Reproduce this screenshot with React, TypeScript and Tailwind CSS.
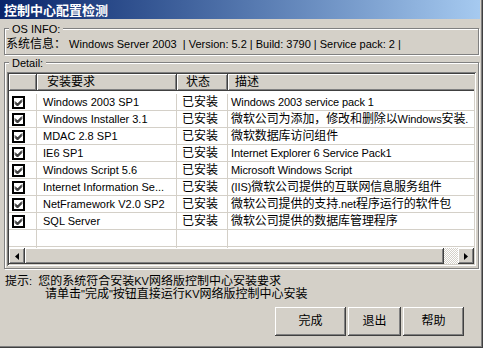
import React from "react";

const rows = [
  { name: "Windows 2003 SP1", desc: "Windows 2003 service pack 1" },
  { name: "Windows Installer 3.1", desc: "微软公司为添加，修改和删除以Windows安装." },
  { name: "MDAC 2.8 SP1", desc: "微软数据库访问组件" },
  { name: "IE6 SP1", desc: "Internet Explorer 6 Service Pack1" },
  { name: "Windows Script 5.6", desc: "Microsoft Windows Script" },
  { name: "Internet Information Se...", desc: "(IIS)微软公司提供的互联网信息服务组件" },
  { name: "NetFramework V2.0 SP2", desc: "微软公司提供的支持.net程序运行的软件包" },
  { name: "SQL Server", desc: "微软公司提供的数据库管理程序" },
];

// CJK runs are drawn a bit larger, like the 12px SimSun next to 8pt Tahoma
function T({ s }: { s: string }) {
  const parts = s.split(/([\u3000-\u9fff\uff00-\uffef]+)/);
  return (
    <>
      {parts.map((p, i) =>
        /[\u3000-\u9fff\uff00-\uffef]/.test(p) ? (
          <span key={i} className="text-[12px]">{p}</span>
        ) : (
          <React.Fragment key={i}>{p}</React.Fragment>
        )
      )}
    </>
  );
}

const raised =
  "bg-[#d4d0c8] shadow-[inset_-1px_-1px_0_#404040,inset_1px_1px_0_#ffffff,inset_-2px_-2px_0_#808080]";
const etched = "border border-[#808080] shadow-[1px_1px_0_#ffffff,inset_1px_1px_0_#ffffff]";

function Check() {
  return (
    <div className="w-[13px] h-[13px] border-2 border-black bg-white flex items-center justify-center">
      <svg width="9" height="9" viewBox="0 0 9 9">
        <path d="M1 3.5 L3.5 6 L8 1.5 M1 4.5 L3.5 7 L8 2.5 M1 5.5 L3.5 8 L8 3.5" stroke="#000" strokeWidth="1" fill="none" />
      </svg>
    </div>
  );
}

export default function App() {
  return (
    <div className="w-[483px] h-[348px] bg-[#d4d0c8] flex flex-col overflow-hidden text-[11px] leading-[13px] text-black font-['Liberation_Sans','Noto_Sans_CJK_SC',sans-serif] shadow-[inset_-1px_-1px_0_#404040,inset_-2px_-2px_0_#808080]">
      {/* title bar */}
      <div className="h-[19px] shrink-0 mr-[3px] bg-gradient-to-r from-[#0a246a] to-[#a6caf0] flex items-center pl-[4px] text-white font-bold text-[13px] font-['Noto_Sans_CJK_SC',sans-serif]">
        控制中心配置检测
      </div>

      {/* OS info */}
      <div className={`relative shrink-0 mt-[9px] ml-[4px] mr-[4px] h-[27px] ${etched} flex items-center pl-[1px] pt-[5px]`}>
        <span className="absolute -top-[6px] left-[4px] px-[3px] bg-[#d4d0c8]">OS INFO:</span>
        <span className="whitespace-pre"><T s="系统信息：" /> Windows Server 2003  | Version: 5.2 | Build: 3790 | Service pack: 2 |</span>
      </div>

      {/* detail */}
      <div className={`relative shrink-0 mt-[7px] ml-[4px] mr-[4px] h-[207px] ${etched} pt-[9px] pl-[2px] pr-[2px]`}>
        <span className="absolute -top-[6px] left-[4px] px-[3px] bg-[#d4d0c8]">Detail:</span>
        <div className="h-[194px] bg-white flex flex-col overflow-hidden shadow-[inset_1px_1px_0_#808080,inset_-1px_-1px_0_#ffffff,inset_2px_2px_0_#404040,inset_-2px_-2px_0_#d4d0c8] p-[2px]">
          <div className="flex-1 overflow-hidden">
            {/* header */}
            <div className="flex h-[17px] whitespace-nowrap">
              <div className={`w-[28px] shrink-0 ${raised}`} />
              <div className={`w-[140px] shrink-0 ${raised} pl-[10px] flex items-center`}><T s="安装要求" /></div>
              <div className={`w-[51px] shrink-0 ${raised} pl-[9px] flex items-center`}><T s="状态" /></div>
              <div className={`w-[300px] shrink-0 ${raised} pl-[7px] flex items-center`}><T s="描述" /></div>
            </div>
            <div className="h-[3px]" />
            {[...rows, null, null].map((r, i) => (
              <div key={i} className="flex h-[17px] whitespace-nowrap border-b border-[#d4d0c8]">
                <div className="w-[28px] shrink-0 border-r border-[#d4d0c8] flex items-center pl-[3px]">
                  {r && <Check />}
                </div>
                <div className="w-[140px] shrink-0 border-r border-[#d4d0c8] flex items-center pl-[6px]">
                  {r && r.name}
                </div>
                <div className="w-[51px] shrink-0 border-r border-[#d4d0c8] flex items-center pl-[5px]">
                  {r && <T s="已安装" />}
                </div>
                <div className="w-[300px] shrink-0 flex items-center pl-[3px] tracking-[-0.1px]">
                  {r && <T s={r.desc} />}
                </div>
              </div>
            ))}
          </div>
          {/* horizontal scrollbar */}
          <div className="h-[16px] flex shrink-0">
            <div className={`w-[16px] ${raised} flex items-center justify-center`}>
              <svg width="4" height="7" viewBox="0 0 4 7"><path d="M4 0 L0 3.5 L4 7 Z" fill="#000" /></svg>
            </div>
            <div className={`w-[419px] ${raised}`} />
            <div className="flex-1 bg-[repeating-conic-gradient(#d4d0c8_0%_25%,#ffffff_0%_50%)] bg-[length:2px_2px]" />
            <div className={`w-[16px] ${raised} flex items-center justify-center`}>
              <svg width="4" height="7" viewBox="0 0 4 7"><path d="M0 0 L4 3.5 L0 7 Z" fill="#000" /></svg>
            </div>
          </div>
        </div>
      </div>

      {/* hint */}
      <div className="shrink-0 mt-[6px] h-[32px] pl-[5px] whitespace-pre overflow-hidden">
        <div className="h-[13px]"><T s="提示" />:  <T s="您的系统符合安装" />KV<T s="网络版控制中心安装要求" /></div>
        <div className="h-[13px] pl-[40px]"><T s="请单击" />"<T s="完成" />"<T s="按钮直接运行" />KV<T s="网络版控制中心安装" /></div>
      </div>

      {/* buttons */}
      <div className="shrink-0 flex justify-end gap-[2px] pr-[19px] text-[12px]">
        <button className={`w-[71px] h-[29px] ${raised}`}>完成</button>
        <button className={`w-[53px] h-[29px] ${raised}`}>退出</button>
        <button className={`w-[61px] h-[29px] ${raised}`}>帮助</button>
      </div>
    </div>
  );
}
